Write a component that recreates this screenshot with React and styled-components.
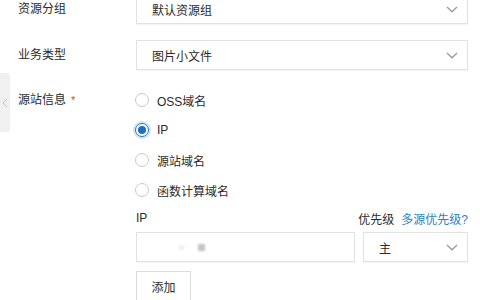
import styled, { createGlobalStyle } from "styled-components";

const Global = createGlobalStyle`
  body {
    margin: 0;
    background: #fff;
    font-family: "Liberation Sans", "Noto Sans CJK SC", sans-serif;
    color: #2b2b2b;
    font-size: 12px;
  }
`;

const Page = styled.div`
  position: relative;
  width: 480px;
  height: 300px;
  overflow: hidden;
`;

const Form = styled.div`
  margin-top: -6px;
  padding-left: 18px;
`;

const Row = styled.div`
  display: grid;
  grid-template-columns: 118px 332px;
  margin-top: ${(p) => p.gap || 0}px;
`;

const Label = styled.div`
  height: 30px;
  line-height: 30px;
  font-size: 12px;
  color: #2b2b2b;
`;

const Required = styled.span`
  color: #e4393c;
  margin-left: 5px;
  font-size: 11px;
`;

const SelectBox = styled.div`
  box-sizing: border-box;
  height: 30px;
  width: ${(p) => p.width || 332}px;
  border: 1px solid #e2e2e2;
  box-shadow: 0 1px 1px rgba(0, 0, 0, 0.04);
  display: flex;
  align-items: center;
  justify-content: space-between;
  padding: 0 9px 0 15px;
  font-size: 12px;
  color: #2b2b2b;
  background: #fff;
`;

const Chevron = () => (
  <svg width="12" height="7" viewBox="0 0 12 7">
    <polyline points="1,1 6,5.8 11,1" fill="none" stroke="#9a9a9a" strokeWidth="1.3" />
  </svg>
);

const RadioList = styled.div`
  display: flex;
  flex-direction: column;
`;

const RadioItem = styled.label`
  height: 30px;
  display: flex;
  align-items: center;
  gap: 8px;
  font-size: 12px;
  color: #2b2b2b;
`;

const Circle = styled.span`
  box-sizing: border-box;
  width: 14px;
  height: 14px;
  margin-left: -1px;
  border-radius: 50%;
  border: 1px solid ${(p) => (p.checked ? "#1f74c8" : "#c9c9c9")};
  display: flex;
  align-items: center;
  justify-content: center;
  box-shadow: ${(p) => (p.checked ? "0 0 0 2px rgba(31,116,200,0.2)" : "none")};
  &::after {
    content: "";
    display: ${(p) => (p.checked ? "block" : "none")};
    width: 8px;
    height: 8px;
    border-radius: 50%;
    background: #1f6fc0;
  }
`;

const SubHeader = styled.div`
  display: flex;
  justify-content: space-between;
  align-items: center;
  width: 332px;
  height: 14px;
  margin-top: 6px;
  font-size: 12px;
  color: #2b2b2b;
`;

const Priority = styled.span`
  display: flex;
  align-items: center;
`;

const Help = styled.a`
  color: #2b7fd0;
  margin-left: 7px;
  text-decoration: none;
`;

const InputRow = styled.div`
  display: flex;
  gap: 8px;
  margin-top: 7px;
`;

const Input = styled.div`
  box-sizing: border-box;
  width: 219px;
  height: 30px;
  border: 1px solid #e2e2e2;
  box-shadow: 0 1px 1px rgba(0, 0, 0, 0.04);
  display: flex;
  align-items: center;
  padding-left: 42px;
  gap: 14px;
`;

const Masked = styled.span`
  width: ${(p) => p.size}px;
  height: ${(p) => p.size}px;
  background: ${(p) => p.color};
  filter: blur(1px);
`;

const Button = styled.button`
  box-sizing: border-box;
  margin-top: 9px;
  width: 55px;
  height: 30px;
  border: 1px solid #dcdcdc;
  background: #fff;
  font-family: inherit;
  font-size: 12px;
  color: #2b2b2b;
  padding: 0;
`;

const SideTab = styled.div`
  position: absolute;
  left: 0;
  top: 73px;
  width: 10px;
  height: 59px;
  background: #f0f0f0;
  border-radius: 0 3px 3px 0;
  display: flex;
  align-items: center;
  justify-content: center;
`;

const options = ["OSS域名", "IP", "源站域名", "函数计算域名"];

export default function App() {
  return (
    <Page>
      <Global />
      <SideTab>
        <svg width="6" height="10" viewBox="0 0 6 10">
          <polyline points="5,1 1,5 5,9" fill="none" stroke="#c4c4c4" strokeWidth="1" />
        </svg>
      </SideTab>
      <Form>
        <Row>
          <Label>资源分组</Label>
          <SelectBox>
            <span>默认资源组</span>
            <Chevron />
          </SelectBox>
        </Row>
        <Row gap={16}>
          <Label>业务类型</Label>
          <SelectBox>
            <span>图片小文件</span>
            <Chevron />
          </SelectBox>
        </Row>
        <Row gap={15}>
          <Label>
            源站信息<Required>*</Required>
          </Label>
          <div>
            <RadioList>
              {options.map((o) => (
                <RadioItem key={o}>
                  <Circle checked={o === "IP"} />
                  {o}
                </RadioItem>
              ))}
            </RadioList>
            <SubHeader>
              <span>IP</span>
              <Priority>
                优先级
                <Help>多源优先级?</Help>
              </Priority>
            </SubHeader>
            <InputRow>
              <Input>
                <Masked size={5} color="#eeeeee" />
                <Masked size={7} color="#c4c4c4" />
              </Input>
              <SelectBox width={105}>
                <span>主</span>
                <Chevron />
              </SelectBox>
            </InputRow>
            <Button>添加</Button>
          </div>
        </Row>
      </Form>
    </Page>
  );
}
